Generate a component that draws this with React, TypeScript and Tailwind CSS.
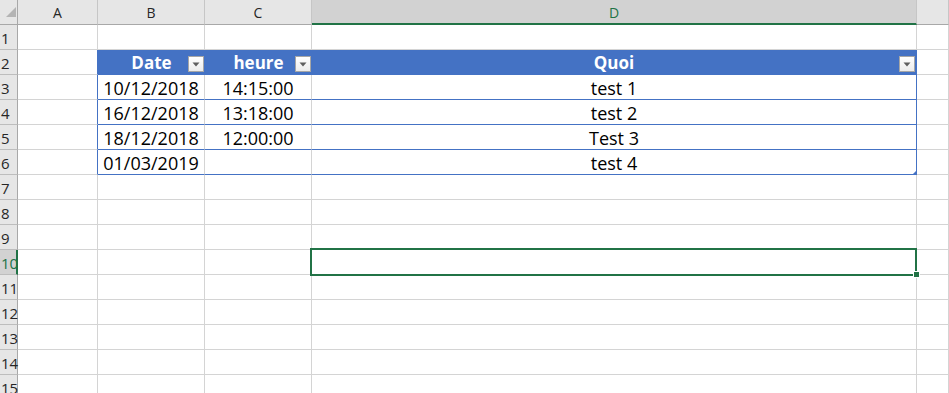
import React from 'react';

// Little Excel sheet: a blue "table" in B2:D6 and a selected cell at D10.

const COLS = ['A', 'B', 'C', 'D', ''];
const ROWS = Array.from({ length: 15 }, (_, i) => i + 1);

const DATA: Record<number, [string, string, string]> = {
  3: ['10/12/2018', '14:15:00', 'test 1'],
  4: ['16/12/2018', '13:18:00', 'test 2'],
  5: ['18/12/2018', '12:00:00', 'Test 3'],
  6: ['01/03/2019', '', 'test 4'],
};

const FilterButton = () => (
  <div className="absolute right-[1px] top-[6px] w-[16px] h-[16px] border border-[#a6a6a6] bg-gradient-to-b from-white to-[#ececec] flex items-center justify-center">
    <svg width="8" height="5" viewBox="0 0 8 5">
      <path d="M0.5 0.5 L7.5 0.5 L4 4.5 Z" fill="#5f5f5f" />
    </svg>
  </div>
);

const App: React.FC = () => {
  return (
    <div
      className="relative w-[949px] h-[393px] overflow-hidden bg-white"
      style={{ fontFamily: '"Open Sans", "Liberation Sans", sans-serif' }}
    >
      <div className="grid grid-cols-[18px_80px_107px_107px_605px_1fr] auto-rows-[25px]">
        {/* corner */}
        <div className="relative bg-[#e6e6e6] border-r border-b border-[#a8a8a8]">
          <svg className="absolute left-[6px] top-[7px]" width="10" height="10" viewBox="0 0 10 10">
            <path d="M10 0 L10 10 L0 10 Z" fill="#b4b4b4" />
          </svg>
        </div>

        {/* column headers */}
        {COLS.map((c) =>
          c === 'D' ? (
            <div
              key={c}
              className="bg-[#d2d2d2] border-r border-[#c6c6c6] border-b-2 border-b-[#217346] flex items-center justify-center pt-[1px] text-[14px] text-[#217346]"
            >
              {c}
            </div>
          ) : (
            <div
              key={c || 'E'}
              className="bg-[#e6e6e6] border-r border-[#c6c6c6] border-b border-b-[#a8a8a8] flex items-center justify-center pt-[1px] text-[14px] text-[#262626]"
            >
              {c}
            </div>
          )
        )}

        {ROWS.map((r) => {
          const inTable = r >= 2 && r <= 6;
          const active = r === 10;
          return (
            <React.Fragment key={r}>
              <div
                className={
                  active
                    ? 'bg-[#d2d2d2] border-r-2 border-r-[#217346] border-b border-b-[#bdbdbd] pl-[1px] pt-[2px] flex items-center text-[15px] text-[#217346]'
                    : 'bg-[#e6e6e6] border-r border-r-[#a8a8a8] border-b border-b-[#bdbdbd] pl-[1px] pt-[2px] flex items-center text-[15px] text-[#262626]'
                }
              >
                {r}
              </div>

              {/* A */}
              <div
                className={
                  inTable
                    ? 'border-r border-r-[#4472c4] border-b border-b-[#d4d4d4]'
                    : 'border-r border-b border-[#d4d4d4]'
                }
              />

              {r === 2 ? (
                <>
                  <div className="relative bg-[#4472c4] border-b border-[#4472c4] flex items-center justify-center pt-[1px] text-[17px] font-bold text-white">
                    Date
                    <FilterButton />
                  </div>
                  <div className="relative bg-[#4472c4] border-b border-[#4472c4] flex items-center justify-center pt-[1px] text-[17px] font-bold text-white">
                    heure
                    <FilterButton />
                  </div>
                  <div className="relative bg-[#4472c4] border-r border-b border-[#4472c4] flex items-center justify-center pt-[1px] text-[17px] font-bold text-white">
                    Quoi
                    <FilterButton />
                  </div>
                </>
              ) : DATA[r] ? (
                <>
                  <div className="border-r border-r-[#d4d4d4] border-b border-b-[#4472c4] flex items-center justify-center pt-[2px] text-[18px] text-black">
                    {DATA[r][0]}
                  </div>
                  <div className="border-r border-r-[#d4d4d4] border-b border-b-[#4472c4] flex items-center justify-center pt-[2px] text-[18px] text-black">
                    {DATA[r][1]}
                  </div>
                  <div className="border-r border-b border-[#4472c4] flex items-center justify-center pt-[2px] text-[18px] text-black">
                    {DATA[r][2]}
                  </div>
                </>
              ) : (
                <>
                  <div className="border-r border-b border-[#d4d4d4]" />
                  <div className="border-r border-b border-[#d4d4d4]" />
                  <div className="border-r border-b border-[#d4d4d4]" />
                </>
              )}

              {/* E */}
              <div className="border-r border-b border-[#d4d4d4]" />
            </React.Fragment>
          );
        })}
      </div>

      {/* table resize handle */}
      <svg className="absolute left-[912px] top-[170px]" width="5" height="5" viewBox="0 0 5 5">
        <path d="M5 0 L5 5 L0 5 Z" fill="#4472c4" />
      </svg>

      {/* selected cell D10 */}
      <div className="absolute left-[310px] top-[248px] w-[607px] h-[28px] border-2 border-[#217346]" />
      <div className="absolute left-[913px] top-[271px] w-[7px] h-[7px] bg-[#217346] border border-white" />
    </div>
  );
};

export default App;
